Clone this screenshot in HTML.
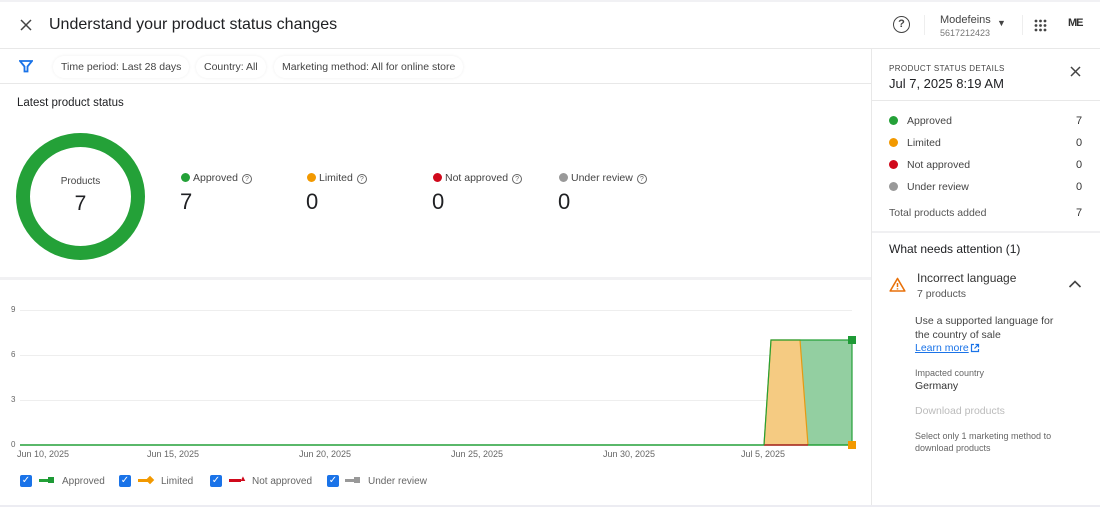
<!DOCTYPE html>
<html><head><meta charset="utf-8"><style>
*{margin:0;padding:0;box-sizing:border-box}
body{width:1100px;height:507px;overflow:hidden;background:#fff;font-family:"Liberation Sans",sans-serif;color:#202124;position:relative}
.a{position:absolute;white-space:nowrap}
.chip{position:absolute;top:56px;height:22px;font-size:10.5px;color:#444;line-height:22px;padding:0 8px;border-radius:11px;background:#fff;box-shadow:0 0 3px #eee}
.dot{display:inline-block;width:9px;height:9px;border-radius:50%;vertical-align:-1px;margin-right:3px}
.q{display:inline-block;width:10px;height:10px;border:1px solid #666;border-radius:50%;font-size:7px;text-align:center;line-height:9px;color:#666;margin-left:4px;vertical-align:0}
.gl{position:absolute;left:20px;width:832px;height:1px;background:#eee}
.yl{position:absolute;left:11px;font-size:8px;color:#666}
.xl{position:absolute;top:449px;font-size:9px;color:#666}
.cb{position:absolute;top:475px;width:12px;height:12px;background:#1a73e8;border-radius:2px;color:#fff;font-size:10px;line-height:12px;text-align:center}
.lg{position:absolute;top:476px;font-size:10px;color:#666}
.rr{position:absolute;left:889px;font-size:10.5px;color:#444}
.rv{position:absolute;left:1076px;font-size:11px;color:#333}
</style></head><body>
<div class="a" style="left:0;top:0;width:1100px;height:2px;background:#f1f1f4"></div>
<svg class="a" style="left:20px;top:19px" width="12" height="12"><path d="M1 1L11 11M11 1L1 11" stroke="#444" stroke-width="1.5"/></svg>
<div class="a" style="left:49px;top:16px;font-size:16px;color:#202124">Understand your product status changes</div>
<div class="a" style="left:893px;top:16px;width:17px;height:17px;border:1.6px solid #444;border-radius:50%;font-size:11px;text-align:center;line-height:14px;font-weight:bold;color:#444">?</div>
<div class="a" style="left:924px;top:15px;width:1px;height:20px;background:#eee"></div>
<div class="a" style="left:940px;top:14px;font-size:11px;color:#444">Modefeins</div>
<div class="a" style="left:940px;top:28px;font-size:9px;color:#777">5617212423</div>
<div class="a" style="left:997px;top:18px;font-size:9px;color:#444">▼</div>
<div class="a" style="left:1022px;top:15px;width:1px;height:20px;background:#eee"></div>
<svg class="a" style="left:1034px;top:19px" width="13" height="13"><g fill="#444"><circle cx="2" cy="2" r="1.4"/><circle cx="6.5" cy="2" r="1.4"/><circle cx="11" cy="2" r="1.4"/><circle cx="2" cy="6.5" r="1.4"/><circle cx="6.5" cy="6.5" r="1.4"/><circle cx="11" cy="6.5" r="1.4"/><circle cx="2" cy="11" r="1.4"/><circle cx="6.5" cy="11" r="1.4"/><circle cx="11" cy="11" r="1.4"/></g></svg>
<div class="a" style="left:1068px;top:17px;font-size:11px;font-weight:bold;letter-spacing:-1px;color:#333">ME</div>
<div class="a" style="left:0;top:48px;width:1100px;height:1px;background:#e8e8e8"></div>
<svg class="a" style="left:19px;top:59px" width="14" height="14"><path d="M1 2H13L8.5 7.5V12.5H5.5V7.5Z" fill="none" stroke="#1a73e8" stroke-width="1.8"/></svg>
<div class="chip" style="left:53px">Time period: Last 28 days</div>
<div class="chip" style="left:196px">Country: All</div>
<div class="chip" style="left:274px">Marketing method: All for online store</div>
<div class="a" style="left:0;top:83px;width:871px;height:1px;background:#e8e8e8"></div>
<div class="a" style="left:17px;top:97px;font-size:11.5px">Latest product status</div>
<div class="a" style="left:16px;top:133px;width:129px;height:127px;border:14px solid #24a138;border-radius:50%"></div>
<div class="a" style="left:16px;top:176px;width:129px;text-align:center;font-size:10px;color:#444">Products</div>
<div class="a" style="left:16px;top:192px;width:129px;text-align:center;font-size:21px">7</div>
<div class="a" style="left:181px;top:172px;font-size:10.5px;color:#444"><span class="dot" style="background:#24a138"></span>Approved<span class="q">?</span></div>
<div class="a" style="left:307px;top:172px;font-size:10.5px;color:#444"><span class="dot" style="background:#f29900"></span>Limited<span class="q">?</span></div>
<div class="a" style="left:433px;top:172px;font-size:10.5px;color:#444"><span class="dot" style="background:#d0091b"></span>Not approved<span class="q">?</span></div>
<div class="a" style="left:559px;top:172px;font-size:10.5px;color:#444"><span class="dot" style="background:#999"></span>Under review<span class="q">?</span></div>
<div class="a" style="left:180px;top:189px;font-size:22px;font-weight:300">7</div>
<div class="a" style="left:306px;top:189px;font-size:22px;font-weight:300">0</div>
<div class="a" style="left:432px;top:189px;font-size:22px;font-weight:300">0</div>
<div class="a" style="left:558px;top:189px;font-size:22px;font-weight:300">0</div>
<div class="a" style="left:0;top:277px;width:871px;height:3px;background:#f1f1f3"></div>
<div class="gl" style="top:310px"></div><div class="gl" style="top:355px"></div><div class="gl" style="top:400px"></div>
<div class="yl" style="top:305px">9</div><div class="yl" style="top:350px">6</div><div class="yl" style="top:395px">3</div><div class="yl" style="top:440px">0</div>
<svg class="a" style="left:0;top:330px" width="870" height="125">
<polygon points="764,115 771,10 800,10 808,115" fill="#f5cb82"/>
<polygon points="800,10 852,10 852,115 808,115" fill="#93cfa1"/>
<polyline points="764,115 771,10 800,10 808,115" fill="none" stroke="#e69a12" stroke-width="1.2"/>
<line x1="20" y1="115" x2="852" y2="115" stroke="#24a138" stroke-width="1.5"/>
<line x1="764" y1="115" x2="808" y2="115" stroke="#d0091b" stroke-width="1.2"/>
<polyline points="764,115 771,10 852,10 852,115" fill="none" stroke="#24a138" stroke-width="1.2"/>
<rect x="848" y="6" width="8" height="8" fill="#1e9a36"/>
<rect x="848" y="111" width="8" height="8" fill="#f29900"/>
</svg>
<div class="xl" style="left:17px">Jun 10, 2025</div><div class="xl" style="left:147px">Jun 15, 2025</div><div class="xl" style="left:299px">Jun 20, 2025</div><div class="xl" style="left:451px">Jun 25, 2025</div><div class="xl" style="left:603px">Jun 30, 2025</div><div class="xl" style="left:741px">Jul 5, 2025</div>
<div class="cb" style="left:20px">✓</div><div class="a" style="left:39px;top:479px;width:12px;height:3px;background:#24a138"></div><div class="a" style="left:48px;top:477px;width:6px;height:6px;background:#1e9a36"></div><div class="lg" style="left:62px">Approved</div>
<div class="cb" style="left:119px">✓</div><div class="a" style="left:138px;top:479px;width:12px;height:3px;background:#f29900"></div><div class="a" style="left:147px;top:477px;width:6px;height:6px;background:#f29900;transform:rotate(45deg)"></div><div class="lg" style="left:161px">Limited</div>
<div class="cb" style="left:210px">✓</div><div class="a" style="left:229px;top:479px;width:12px;height:3px;background:#d0091b"></div><div class="a" style="left:239px;top:474px;font-size:8px;color:#d0091b">▲</div><div class="lg" style="left:252px">Not approved</div>
<div class="cb" style="left:327px">✓</div><div class="a" style="left:345px;top:479px;width:12px;height:3px;background:#999"></div><div class="a" style="left:354px;top:477px;width:6px;height:6px;background:#999"></div><div class="lg" style="left:368px">Under review</div>
<div class="a" style="left:871px;top:48px;width:1px;height:457px;background:#e8e8e8"></div>
<div class="a" style="left:0;top:505px;width:1100px;height:2px;background:#ececf2"></div>
<div class="a" style="left:889px;top:64px;font-size:8px;letter-spacing:.4px;color:#444">PRODUCT STATUS DETAILS</div>
<div class="a" style="left:889px;top:76px;font-size:13px;color:#202124">Jul 7, 2025 8:19 AM</div>
<svg class="a" style="left:1070px;top:66px" width="11" height="11"><path d="M1 1L10 10M10 1L1 10" stroke="#444" stroke-width="1.5"/></svg>
<div class="a" style="left:872px;top:100px;width:228px;height:1px;background:#e8e8e8"></div>
<div class="rr" style="top:115px"><span class="dot" style="background:#24a138;margin-right:9px"></span>Approved</div><div class="rv" style="top:115px">7</div>
<div class="rr" style="top:137px"><span class="dot" style="background:#f29900;margin-right:9px"></span>Limited</div><div class="rv" style="top:137px">0</div>
<div class="rr" style="top:159px"><span class="dot" style="background:#d0091b;margin-right:9px"></span>Not approved</div><div class="rv" style="top:159px">0</div>
<div class="rr" style="top:181px"><span class="dot" style="background:#999;margin-right:9px"></span>Under review</div><div class="rv" style="top:181px">0</div>
<div class="rr" style="top:207px;font-size:10.5px;color:#555">Total products added</div><div class="rv" style="top:207px">7</div>
<div class="a" style="left:872px;top:231px;width:228px;height:2px;background:#f0f0f2"></div>
<div class="a" style="left:889px;top:242px;font-size:12px">What needs attention (1)</div>
<svg class="a" style="left:889px;top:277px" width="17" height="15"><path d="M8.5 1.5L15.8 14H1.2Z" fill="none" stroke="#e8710a" stroke-width="1.6" stroke-linejoin="round"/><path d="M8.5 6v4M8.5 11.3v1.2" stroke="#e8710a" stroke-width="1.5"/></svg>
<div class="a" style="left:917px;top:271px;font-size:12px;color:#333">Incorrect language</div>
<div class="a" style="left:917px;top:288px;font-size:10.5px;color:#555">7 products</div>
<svg class="a" style="left:1068px;top:279px" width="14" height="10"><path d="M1.5 8L7 2.5L12.5 8" fill="none" stroke="#444" stroke-width="1.6"/></svg>
<div class="a" style="left:915px;top:314px;font-size:10.5px;color:#444;line-height:14px">Use a supported language for<br>the country of sale</div>
<div class="a" style="left:915px;top:342px;font-size:10.5px;color:#1a73e8;text-decoration:underline">Learn more</div>
<svg class="a" style="left:970px;top:343px" width="10" height="10"><path d="M4 1.5H1.5V8.5H8.5V6M5.5 1.5H8.5V4.5M8.5 1.5L4.5 5.5" fill="none" stroke="#1a73e8" stroke-width="1.2"/></svg>
<div class="a" style="left:915px;top:368px;font-size:9px;color:#666">Impacted country</div>
<div class="a" style="left:915px;top:380px;font-size:10.5px;color:#333">Germany</div>
<div class="a" style="left:915px;top:405px;font-size:10.5px;color:#bbb">Download products</div>
<div class="a" style="left:915px;top:431px;font-size:9px;color:#666;line-height:11.5px">Select only 1 marketing method to<br>download products</div>
</body></html>
